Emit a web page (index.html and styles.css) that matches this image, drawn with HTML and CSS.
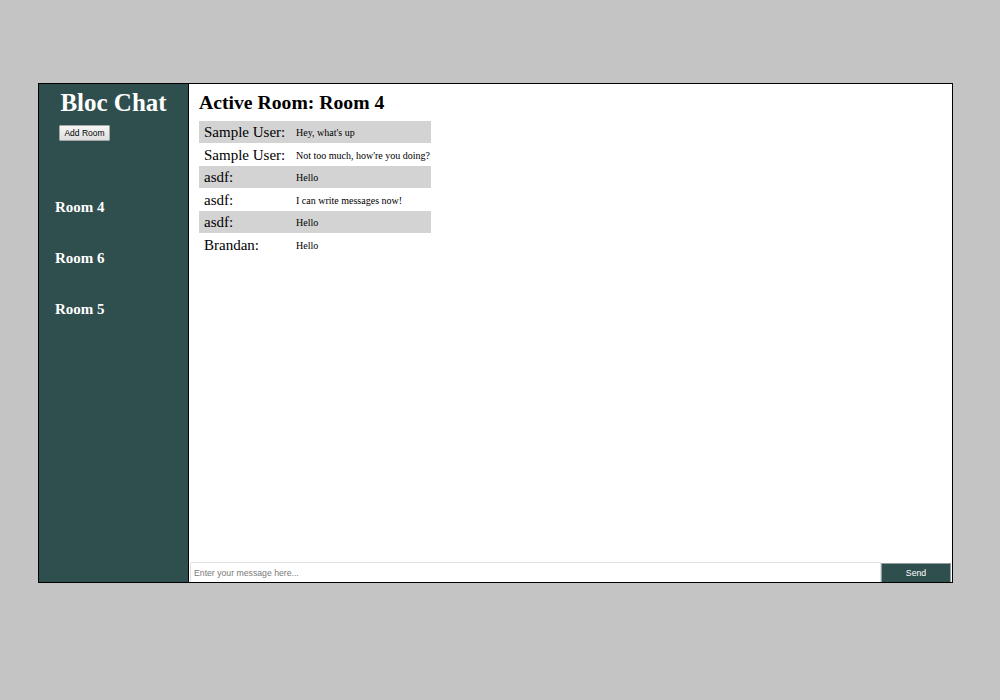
FILE: index.html
```html
<!DOCTYPE html>
<html lang="en">
<head>
<meta charset="utf-8">
<title>Bloc Chat</title>
<link rel="stylesheet" href="styles.css">
</head>
<body>
<div class="app">
  <aside class="sidebar">
    <h1 class="brand">Bloc Chat</h1>
    <button class="add-room" type="button">Add Room</button>
    <ul class="rooms">
      <li class="room">Room 4</li>
      <li class="room">Room 6</li>
      <li class="room">Room 5</li>
    </ul>
  </aside>
  <main class="main">
    <div class="content">
      <h2 class="active-room">Active Room: Room 4</h2>
      <div class="messages">
        <div class="msg alt"><span class="user">Sample User:</span><span class="text">Hey, what's up</span></div>
        <div class="msg"><span class="user">Sample User:</span><span class="text">Not too much, how're you doing?</span></div>
        <div class="msg alt"><span class="user">asdf:</span><span class="text">Hello</span></div>
        <div class="msg"><span class="user">asdf:</span><span class="text">I can write messages now!</span></div>
        <div class="msg alt"><span class="user">asdf:</span><span class="text">Hello</span></div>
        <div class="msg"><span class="user">Brandan:</span><span class="text">Hello</span></div>
      </div>
    </div>
    <form class="composer">
      <input class="composer-input" type="text" placeholder="Enter your message here...">
      <button class="send" type="button">Send</button>
    </form>
  </main>
</div>
</body>
</html>
```

FILE: styles.css
```css
html, body {
  margin: 0;
  padding: 0;
}

body {
  background: #c4c4c4;
  font-family: "Liberation Serif", "Times New Roman", serif;
}

.app {
  box-sizing: border-box;
  width: 915px;
  height: 500px;
  margin: 83px 0 0 38px;
  border: 1px solid #000;
  display: flex;
  background: #fff;
}

.sidebar {
  width: 149px;
  flex: none;
  background: #2f4f4f;
  border-right: 1px solid #000;
  display: flex;
  flex-direction: column;
  padding-top: 5px;
}

.brand {
  margin: 0;
  font-size: 25px;
  line-height: 27px;
  font-weight: bold;
  color: #fff;
  text-align: center;
}

.add-room {
  align-self: flex-start;
  margin: 9px 0 0 20px;
  box-sizing: border-box;
  width: 51px;
  height: 16px;
  padding: 0;
  font-family: "Liberation Sans", Arial, sans-serif;
  font-size: 8.5px;
  color: #000;
  background: linear-gradient(#f6f6f6, #dedede);
  border: 1px solid #a6a6a6;
  border-radius: 1px;
}

.rooms {
  list-style: none;
  margin: 58px 0 0;
  padding: 0 0 0 16px;
  display: flex;
  flex-direction: column;
  gap: 34px;
}

.room {
  font-size: 15px;
  line-height: 17px;
  font-weight: bold;
  color: #fff;
}

.main {
  flex: 1;
  display: flex;
  flex-direction: column;
  min-width: 0;
}

.content {
  flex: 1;
  padding: 7px 0 0 10px;
}

.active-room {
  margin: 0 0 6.5px;
  font-size: 19.7px;
  line-height: 23px;
  font-weight: bold;
  color: #000;
}

.messages {
  width: 232px;
  display: flex;
  flex-direction: column;
}

.msg {
  display: grid;
  grid-template-columns: 97px 1fr;
  align-items: center;
  box-sizing: border-box;
  height: 22.5px;
  padding-top: 2px;
  white-space: nowrap;
}

.msg.alt {
  background: #d3d3d3;
}

.user {
  padding-left: 5px;
  font-size: 15px;
  color: #000;
}

.text {
  font-size: 10px;
  color: #000;
}

.composer {
  display: flex;
  height: 20px;
  margin: 0 1px 0 1px;
}

.composer-input {
  flex: 1;
  box-sizing: border-box;
  height: 20px;
  margin: 0;
  padding: 0 3px;
  border: 1px solid #e2e2e2;
  border-bottom: none;
  border-radius: 2px 0 0 0;
  font-family: "Liberation Sans", Arial, sans-serif;
  font-size: 8.7px;
  outline: none;
}

.composer-input::placeholder {
  color: #7a7a7a;
}

.send {
  width: 70px;
  box-sizing: border-box;
  height: 19px;
  margin: 1px 0 0;
  padding: 0;
  background: #2f4f4f;
  color: #fff;
  border: 1px solid #8f9e9e;
  border-bottom: none;
  font-family: "Liberation Sans", Arial, sans-serif;
  font-size: 8.7px;
}
```
